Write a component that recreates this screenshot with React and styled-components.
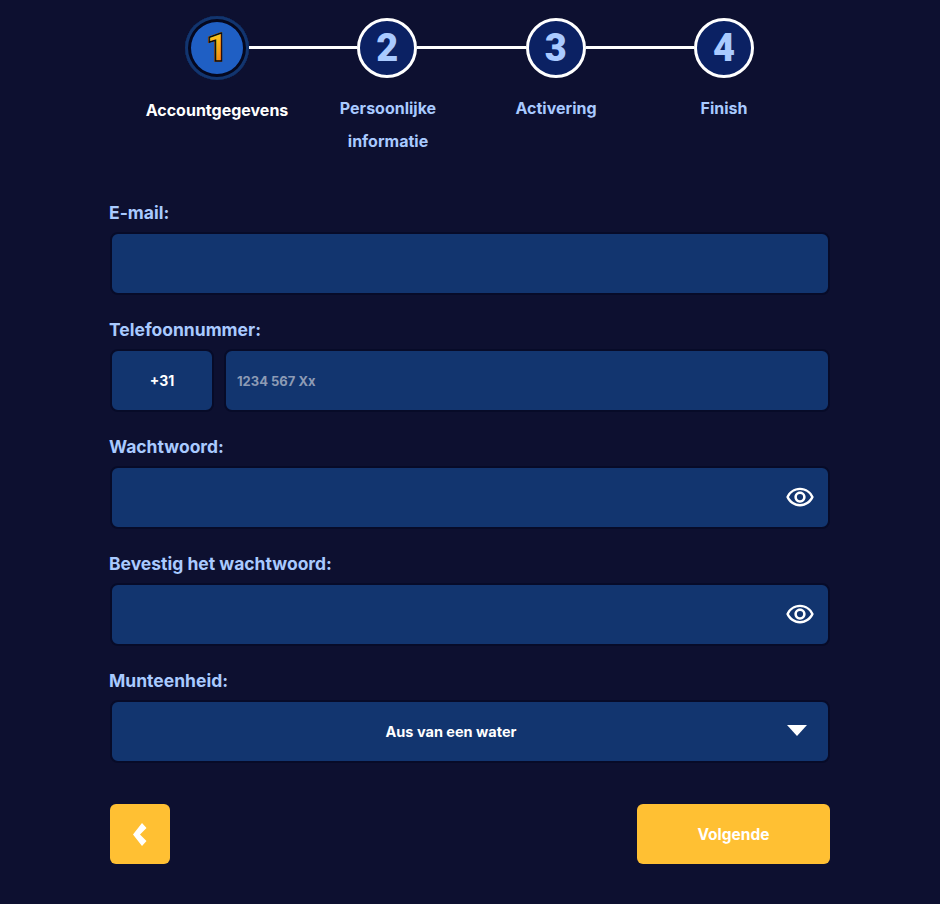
import { Fragment } from 'react';
import styled, { createGlobalStyle } from 'styled-components';
import { MdOutlineRemoveRedEye } from 'react-icons/md';

const steps = [
  { n: 1, label: 'Accountgegevens', active: true },
  { n: 2, label: 'Persoonlijke informatie' },
  { n: 3, label: 'Activering' },
  { n: 4, label: 'Finish' },
];

function App() {
  return (
    <Page>
      <GlobalStyle />
      <CircleRow>
        {steps.map((s, i) => (
          <Fragment key={s.n}>
            <Circle $active={s.active}>
              <Digit $active={s.active}>{s.n}</Digit>
            </Circle>
            {i < steps.length - 1 && <Line />}
          </Fragment>
        ))}
      </CircleRow>
      <LabelRow>
        {steps.map((s) => (
          <StepLabel key={s.n} $active={s.active}>{s.label}</StepLabel>
        ))}
      </LabelRow>

      <Form>
        <Field>
          <Label>E-mail:</Label>
          <Box><Input type="email" /></Box>
        </Field>
        <Field>
          <Label>Telefoonnummer:</Label>
          <PhoneRow>
            <Prefix>+31</Prefix>
            <Box><Input type="tel" placeholder="1234 567 Xx" /></Box>
          </PhoneRow>
        </Field>
        <Field>
          <Label>Wachtwoord:</Label>
          <Box>
            <Input type="password" />
            <EyeIcon />
          </Box>
        </Field>
        <Field>
          <Label>Bevestig het wachtwoord:</Label>
          <Box>
            <Input type="password" />
            <EyeIcon />
          </Box>
        </Field>
        <Field>
          <Label>Munteenheid:</Label>
          <Box>
            <Select defaultValue="aus">
              <option value="aus">Aus van een water</option>
            </Select>
            <Arrow />
          </Box>
        </Field>
        <Buttons>
          <BackButton type="button">
            <svg width="14" height="23" viewBox="0 0 14 23">
              <polygon points="9,0 13.5,5 7,11.5 13.5,18 9,23 0,11.5" fill="#ffffff" />
            </svg>
          </BackButton>
          <NextButton type="button">Volgende</NextButton>
        </Buttons>
      </Form>
    </Page>
  );
}

const GlobalStyle = createGlobalStyle`
  body {
    margin: 0;
    background: #0d1030;
    font-family: "Inter", "Liberation Sans", sans-serif;
  }
`;

const Page = styled.div`
  width: 940px;
  height: 904px;
  box-sizing: border-box;
  padding-top: 15px;
  background: #0d1030;
  overflow: hidden;
`;

const CircleRow = styled.div`
  display: flex;
  align-items: center;
  width: 569px;
  height: 65px;
  margin-left: 185px;
`;

const Circle = styled.div`
  flex: none;
  box-sizing: border-box;
  display: flex;
  align-items: center;
  justify-content: center;
  border-radius: 50%;
  width: ${(p) => (p.$active ? '64px' : '60px')};
  height: ${(p) => (p.$active ? '64px' : '60px')};
  background: ${(p) => (p.$active ? '#1f5fc4' : '#0b2163')};
  border: ${(p) => (p.$active ? 'none' : '3px solid #ffffff')};
  box-shadow: ${(p) => (p.$active ? 'inset 0 0 0 3px #12356f, inset 0 0 0 6px #05081f' : 'none')};
`;

const Digit = styled.span`
  font-family: "Roboto", "Liberation Sans", sans-serif;
  font-size: 38px;
  font-weight: 900;
  line-height: 1;
  color: #a9caff;
  ${(p) => p.$active && `
    background: linear-gradient(#ffd21f, #f07a10);
    -webkit-background-clip: text;
    background-clip: text;
    color: transparent;
    -webkit-text-stroke: 1.5px #0a0a10;
    paint-order: stroke fill;
  `}
`;

const Line = styled.div`
  flex: 1;
  height: 3px;
  background: #ffffff;
`;

const LabelRow = styled.div`
  display: grid;
  grid-template-columns: 171px 168px 168px 168px;
  margin: 12px 0 0 133px;
  width: 675px;
`;

const StepLabel = styled.div`
  justify-self: center;
  max-width: 110px;
  text-align: center;
  font-size: 16px;
  font-weight: 700;
  line-height: 33px;
  color: ${(p) => (p.$active ? '#ffffff' : '#a9caff')};
  ${(p) => p.$active && `
    max-width: none;
    padding-top: 2px;
    margin-right: 3px;
  `}
`;

const Form = styled.form`
  display: flex;
  flex-direction: column;
  gap: 25px;
  width: 720px;
  margin: 45px 0 0 110px;
`;

const Field = styled.div`
  display: flex;
  flex-direction: column;
  gap: 9px;
`;

const Label = styled.label`
  margin-left: -1px;
  font-size: 17.5px;
  font-weight: 700;
  line-height: 20px;
  color: #a9caff;
`;

const Box = styled.div`
  position: relative;
  display: flex;
  align-items: center;
  width: 100%;
  box-sizing: border-box;
  height: 63px;
  border: 2px solid #070b28;
  border-radius: 8px;
  background: #12356f;
`;

const Input = styled.input`
  flex: 1;
  min-width: 0;
  height: 100%;
  box-sizing: border-box;
  padding: 0 11px;
  border: none;
  outline: none;
  background: transparent;
  color: #ffffff;
  font: 700 13px "Inter", "Liberation Sans", sans-serif;

  &::placeholder {
    color: #8d9bb5;
    opacity: 1;
  }
`;

const PhoneRow = styled.div`
  display: flex;
  gap: 10px;
`;

const Prefix = styled.div`
  flex: 0 0 104px;
  box-sizing: border-box;
  height: 63px;
  display: flex;
  align-items: center;
  justify-content: center;
  border: 2px solid #070b28;
  border-radius: 8px;
  background: #12356f;
  color: #ffffff;
  font-size: 14px;
  font-weight: 700;
`;

const EyeIcon = styled(MdOutlineRemoveRedEye)`
  position: absolute;
  right: 13px;
  top: 14px;
  width: 30px;
  height: 30px;
  color: #ffffff;
`;

const Select = styled.select`
  flex: 1;
  height: 100%;
  padding: 0 38px 0 0;
  border: none;
  outline: none;
  appearance: none;
  background: transparent;
  color: #ffffff;
  text-align: center;
  font: 700 14.5px "Inter", "Liberation Sans", sans-serif;
`;

const Arrow = styled.span`
  position: absolute;
  right: 21px;
  top: 23px;
  border-left: 10px solid transparent;
  border-right: 10px solid transparent;
  border-top: 11px solid #ffffff;
  pointer-events: none;
`;

const Buttons = styled.div`
  display: flex;
  justify-content: space-between;
  margin-top: 16px;
`;

const BackButton = styled.button`
  width: 60px;
  height: 60px;
  display: flex;
  align-items: center;
  justify-content: center;
  padding: 0;
  border: none;
  border-radius: 6px;
  background: #ffc033;
`;

const NextButton = styled.button`
  width: 193px;
  height: 60px;
  border: none;
  border-radius: 6px;
  background: #ffc033;
  color: #ffffff;
  font: 700 15.5px "Inter", "Liberation Sans", sans-serif;
`;

export default App;
